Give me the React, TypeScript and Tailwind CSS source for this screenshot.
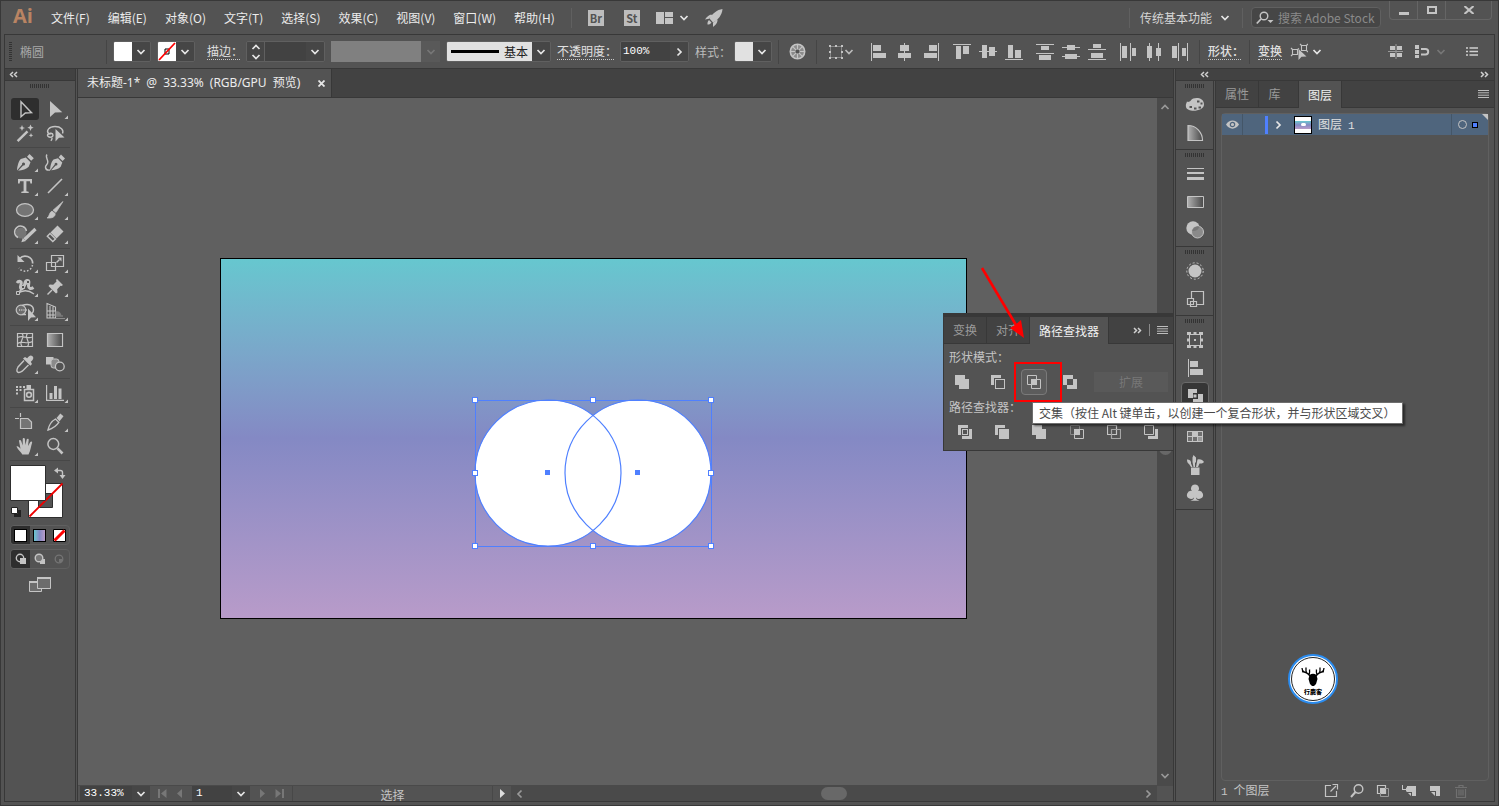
import { useState } from 'react';
import type { ReactNode } from 'react';

type Rect = [x: number, y: number, w: number, h: number];

interface Tool {
  name: string;
  art: ReactNode;
  /** The tool hides a flyout group, marked by a small corner triangle. */
  more?: boolean;
}

const MENUS = ['文件(F)', '编辑(E)', '对象(O)', '文字(T)', '选择(S)', '效果(C)', '视图(V)', '窗口(W)', '帮助(H)'];

const DOC_TITLE = ['未标题-1*', '@', '33.33%', '(RGB/GPU', '预览)'];

/** Align / distribute icons on an 18px grid, three per group. */
const ALIGN_GROUPS: { name: string; rects: Rect[] }[][] = [
  [
    { name: '水平左对齐', rects: [[1, 0, 1, 18], [3, 2, 8, 6], [3, 10, 13, 5]] },
    { name: '水平居中对齐', rects: [[8, 0, 1, 18], [4, 2, 9, 6], [2, 10, 13, 5]] },
    { name: '水平右对齐', rects: [[16, 0, 1, 18], [7, 2, 8, 6], [2, 10, 13, 5]] },
  ],
  [
    { name: '垂直顶对齐', rects: [[0, 1, 18, 1], [3, 3, 5, 13], [10, 3, 6, 8]] },
    { name: '垂直居中对齐', rects: [[0, 8, 18, 1], [3, 2, 5, 13], [10, 4, 6, 9]] },
    { name: '垂直底对齐', rects: [[0, 16, 18, 1], [3, 2, 5, 13], [10, 7, 6, 8]] },
  ],
  [
    { name: '垂直顶分布', rects: [[0, 1, 18, 1], [5, 3, 8, 4], [0, 10, 18, 1], [3, 12, 12, 5]] },
    { name: '垂直居中分布', rects: [[0, 4, 18, 1], [5, 2, 8, 5], [0, 13, 18, 1], [3, 11, 12, 5]] },
    { name: '垂直底分布', rects: [[0, 6, 18, 1], [5, 1, 8, 4], [0, 16, 18, 1], [3, 10, 12, 5]] },
  ],
  [
    { name: '水平左分布', rects: [[1, 0, 1, 18], [3, 3, 5, 12], [11, 0, 1, 18], [13, 5, 4, 8]] },
    { name: '水平居中分布', rects: [[4, 0, 1, 18], [2, 3, 5, 12], [13, 0, 1, 18], [11, 5, 5, 8]] },
    { name: '水平右分布', rects: [[7, 0, 1, 18], [1, 3, 5, 12], [16, 0, 1, 18], [11, 5, 4, 8]] },
  ],
];

const LINE = { fill: 'none', stroke: '#c4c4c4', strokeWidth: 1.4 };

// Tool art is drawn in a 30x24 cell.
const TOOL_GROUPS: Tool[][] = [
  [
    { name: '选择工具', art: <path d="M11 4.8v15l4.3-3.8 6.2-.3z" {...LINE} /> },
    { name: '直接选择工具', art: <path d="M10 4v16l5-4.5 7.3-.3z" />, more: true },
    {
      name: '魔棒工具',
      art: (
        <>
          <path d="M7.6 20.2 17.5 10.3" fill="none" stroke="#c4c4c4" strokeWidth="2.4" />
          <path d="M12 4l.9 2.2 2.1.8-2.1.8L12 10l-.9-2.2L9 7l2.1-.8zM20.500 3.500l1 2.300 2.200.9-2.200.9-1 2.300-1-2.300-2.200-.9 2.200-.9zM21 12l.7 1.700 1.600.6-1.600.6L21 16.500l-.7-1.600-1.600-.6 1.600-.6z" />
        </>
      ),
    },
    {
      name: '套索工具',
      art: (
        <>
          <path d="M8.500 12.500C6 9.500 9 5.500 15 5.500s9 3.500 7.500 7M8 13.500c1.500-2 5-1.500 5 .7s-3.500 2.600-5 1 1-3.200 2.500-1.700M11.500 16.500c1 .6.500 2.200-.7 3.200" {...LINE} />
          <path d="M15.500 8v12.500l3.500-3.700 5.500-.2z" />
        </>
      ),
    },
  ],
  [
    {
      name: '钢笔工具',
      art: (
        <>
          <path d="M7 20.500c.2-4 1.500-9.500 3.800-11.500l5-1.500 4.700 4.700-1.800 4.500c-2 2.300-6.500 3.400-10.600 4l5-5.200a1.500 1.500 0 1 0-1-1zM17 6.700 19.500 4l4.300 4.300-2.600 2.500z" />
        </>
      ),
      more: true,
    },
    {
      name: '曲率工具',
      art: (
        <>
          <path d="M10 20.500c.2-4 1.300-9 3.500-11l4.500-1.300 4.300 4.300-1.600 4.200c-2 2.200-6 3.200-9.600 3.600l4.600-4.800a1.400 1.400 0 1 0-1-1zM18.700 7.200 21 4.500l4 4-2.400 2.400z" />
          <path d="M7 4.500c-2 2 .8 4.500.8 7.500S5 15 5.500 17.500s2 3 4.500 2.500" {...LINE} />
        </>
      ),
    },
    { name: '文字工具', art: <path d="M8 5h14v4.500h-1.600l-.5-2.300h-3.500v10l2.300.5V19h-7.400v-1.300l2.300-.5v-10h-3.500l-.5 2.300H8z" />, more: true },
    { name: '直线段工具', art: <path d="M8 19 22 5" fill="none" stroke="#c4c4c4" strokeWidth="1.600" />, more: true },
    { name: '椭圆工具', art: <ellipse cx="15" cy="12" rx="8.500" ry="6.300" fill="#757575" stroke="#c4c4c4" strokeWidth="1.300" />, more: true },
    {
      name: '画笔工具',
      art: <path d="M23 3.500 16 14.500l-3-2.300zM12 13l3.200 2.500c.2 3.200-2.800 5-8.200 4.500 2.500-1.200 2-5.500 5-7z" stroke="#c4c4c4" strokeWidth=".7" />,
      more: true,
    },
    {
      name: 'Shaper 工具',
      art: (
        <>
          <circle cx="11" cy="11" r="5.500" fill="#757575" />
          <path d="M16.500 9A6 6 0 1 0 8 15.500" {...LINE} />
          <path d="M25.500 7 14.500 17.500" fill="none" stroke="#c4c4c4" strokeWidth="3.200" />
          <path d="M16 19l-4.700 1.200L12.800 16z" />
        </>
      ),
      more: true,
    },
    {
      name: '橡皮擦工具',
      art: (
        <>
          <path d="M17.500 3.500 23.500 9.500 16.500 16.500 10.500 10.500z" />
          <path d="M10 11.500 7.300 14.200 12.800 19.500 15.500 17z" {...LINE} />
        </>
      ),
      more: true,
    },
  ],
  [
    {
      name: '旋转工具',
      art: (
        <>
          <path d="M9.500 7.800C14 2.500 22.500 5.500 22.700 12.500" fill="none" stroke="#c4c4c4" strokeWidth="1.700" />
          <path d="M7.500 4v7h7z" />
          <path d="M22.500 14A7.500 7.500 0 0 1 9 17" fill="none" stroke="#c4c4c4" strokeWidth="1.500" strokeDasharray="1.600 1.800" />
        </>
      ),
      more: true,
    },
    {
      name: '比例缩放工具',
      art: (
        <>
          <path d="M11.500 4.500h12v11h-12zM6.500 11.500h9v8h-9z" {...LINE} strokeWidth="1.200" />
          <path d="M16.500 11.500 19.500 8.500" {...LINE} />
          <path d="M17.500 6.500h4v4z" />
        </>
      ),
      more: true,
    },
    {
      name: '宽度工具',
      art: (
        <>
          <path d="M7 8c2-3 5-1.500 4 1.500s-.5 6 2 3.500 1-7 4-7.500 1.500 3 1.500 5.500 2 3.500 5 1.500" fill="none" stroke="#c4c4c4" strokeWidth="3" />
          <path d="M7.500 18.500c5-3.500 11-3.500 16.500.5M8 18 18 7" {...LINE} />
          <path d="M6.500 16.500h3v3h-3zM16.500 5.500h3v3h-3zM11.500 10.500h3v3h-3z" fill="#535353" stroke="#c4c4c4" />
        </>
      ),
      more: true,
    },
    {
      name: '操控变形工具',
      art: (
        <>
          <path d="M17 4l6 6-1.500 1-1-.3-3.300 3.500.3 3.200L16 18.500 8.500 11l1.200-1.500 3.500.2 3.300-3.300L16 5z" />
          <path d="M12 15 7.500 19.500" {...LINE} />
        </>
      ),
      more: true,
    },
    {
      name: '形状生成器工具',
      art: (
        <>
          <circle cx="11" cy="11" r="4.800" fill="#6c6c6c" stroke="#c4c4c4" strokeWidth="1.200" />
          <path d="M12 6.500c7-2.500 11.500 0 11.500 4.500 0 1.500-.5 2.500-1.500 3.500M12 15.500h4" {...LINE} />
          <path d="M9 11h8" fill="none" stroke="#c4c4c4" strokeWidth="1.300" strokeDasharray="1.200 1" />
          <path d="M18 9.500V22l3-3.600 5-.2z" />
        </>
      ),
      more: true,
    },
    {
      name: '透视网格工具',
      art: (
        <>
          <path d="M7 4.500 15.500 8v11H7zM7 12h8.500M10 5.500v13.500M13 7v12M7 16h8" {...LINE} strokeWidth="1.100" />
          <path d="M15.500 12.500c3-1 5.500 1 6 4h-6z" fill="#7d7d7d" />
          <path d="M15 17h8M15 19.500h10" stroke="#8d8d8d" />
        </>
      ),
      more: true,
    },
  ],
  [
    {
      name: '网格工具',
      art: <path d="M7.500 5.500h15v13h-15zM7.500 9.500c6-3 9 2 15-.5M7.500 15.500c5-3.500 9 1.500 15-2M12 5.500c4 4-4 8 0 13M17.500 5.500c-4 4 4 9 0 13" {...LINE} strokeWidth="1.200" />,
    },
    { name: '渐变工具', art: <path d="M7.500 5.500h15v13h-15z" fill="url(#grey-ramp)" stroke="#c4c4c4" strokeWidth="1.200" /> },
    {
      name: '吸管工具',
      art: (
        <>
          <path d="M14 8.500 8 15c-.8 1.500-1.500 4-.5 5s3.500 0 4.700-.8L18.500 13" {...LINE} />
          <path d="M13 6.500l2-1.500 2.200 1.200C19.500 3 21 3 22.500 4.200s1 3.300-1.700 5.500L22 12l-1.600 1.700z" />
        </>
      ),
      more: true,
    },
    {
      name: '混合工具',
      art: (
        <>
          <path d="M6 5h7.500v7.500H6z" />
          <rect x="11" y="7" width="8" height="9" rx="2.500" fill="#8a8a8a" stroke="#c4c4c4" />
          <circle cx="19.800" cy="14.500" r="4.400" fill="#535353" stroke="#c4c4c4" strokeWidth="1.300" />
        </>
      ),
    },
  ],
  [
    {
      name: '符号喷枪工具',
      art: (
        <>
          <path d="M14.500 8.500h9v11h-9z" {...LINE} strokeWidth="1.500" />
          <path d="M16.500 4h4.500v4.500h-4.500zM6 5h2v2H6zM9.500 5h2v2h-2zM13 5h2v2h-2zM6 8h2v2H6zM9.500 8h2v2h-2zM6 11.500h2v2H6z" />
          <circle cx="19" cy="13.800" r="2.400" {...LINE} strokeWidth="1.600" />
        </>
      ),
      more: true,
    },
    { name: '柱形图工具', art: <path d="M6 4h1.200v14.800H24V20H6zM9.500 12h3v6h-3zM14 5h3v13h-3zM18.500 7.500h3V18h-3z" />, more: true },
  ],
  [
    {
      name: '画板工具',
      art: (
        <>
          <path d="M10.500 8.500H18l3.500 3.500v6.500h-11z" fill="#757575" stroke="#c4c4c4" strokeWidth="1.200" />
          <path d="M10.500 3v4M5 8.500h4" {...LINE} strokeWidth="1.200" />
        </>
      ),
    },
    {
      name: '切片工具',
      art: (
        <>
          <path d="M8 20c1-5 3-8.500 7.500-11l3.300 3.300C16 16.500 12.500 18.500 8 20z" {...LINE} />
          <path d="M16.500 8l3.800-4.500 3.200 2.700-4 5z" />
        </>
      ),
      more: true,
    },
    {
      name: '抓手工具',
      art: <path d="M6.500 12.500c1-.8 2.500 0 4 2.300L9 7c0-1.500 1.800-1.500 2.200 0l1.500 4.500V5c0-1.500 2-1.500 2.200 0l.5 6 1.300-5.500c.4-1.400 2.200-1 2 .5L18 12l2.300-4c.8-1.200 2.200-.5 1.800.8-1 3-1.500 8-3.600 11.700h-6.200c-1-2.500-4.300-4.500-5.800-8z" />,
      more: true,
    },
    {
      name: '缩放工具',
      art: (
        <>
          <circle cx="13.300" cy="10" r="5.400" {...LINE} strokeWidth="1.500" />
          <path d="M17.500 14.300 22.500 19.500" fill="none" stroke="#c4c4c4" strokeWidth="2.600" />
        </>
      ),
    },
  ],
];

// Dock art is drawn in a 20x20 cell.
const DOCK_GROUPS: { name: string; art: ReactNode }[][] = [
  [
    {
      name: '颜色',
      art: (
        <>
          <path d="M2 6c0 1.700 3 .7 4-.8C8 2 19 1.500 19 9.500c0 7-16.500 8.500-18 2.500C.500 8.500 2 8 2 6z" />
          <path d="M4.500 11h2.500v2H4.500zM9 12.500h2.500v2H9zM13.500 11.500H16v2h-2.500zM15.500 7.500h2v2h-2zM12 5.500h2.500v2H12z" fill="#535353" />
        </>
      ),
    },
    { name: '颜色参考', art: <path d="M3 2.500c8 0 14.500 6.500 14.500 15H3z" fill="url(#grey-ramp)" stroke="#c4c4c4" strokeWidth="1.200" /> },
  ],
  [
    { name: '描边', art: <path d="M2 4h17v1H2zM2 8h17v2H2zM2 13h17v3H2z" /> },
    { name: '渐变', art: <path d="M2.500 4.500h16v11h-16z" fill="url(#grey-ramp)" stroke="#c4c4c4" /> },
    {
      name: '透明度',
      art: (
        <>
          <circle cx="8" cy="8" r="6.700" />
          <circle cx="12.500" cy="12" r="6" fill="#8a8a8a" stroke="#c4c4c4" />
          <path d="M7 11a6 6 0 0 1 7.500-4.500A7 7 0 0 1 7 11z" fill="#777" />
        </>
      ),
    },
  ],
  [
    {
      name: '外观',
      art: (
        <>
          <circle cx="10" cy="10" r="6.500" />
          <circle cx="10" cy="10" r="8.200" fill="none" stroke="#c4c4c4" strokeDasharray="2 2" />
        </>
      ),
    },
    { name: '图形样式', art: <path d="M6.500 9V2.500h12v13H11M2.500 9.500h6v6h-6zM5.500 12.500h6v5h-6z" {...LINE} strokeWidth="1.200" /> },
  ],
  [
    {
      name: '变换',
      art: (
        <>
          <path d="M4.500 4.500h11v11h-11z" {...LINE} strokeWidth="1" />
          <path d="M2 2h4v3H2zM8.500 2h3v3h-3zM14 2h4v3h-4zM2 8.500h3v3H2zM15 8.500h3v3h-3zM2 15h4v3H2zM8.500 15h3v3h-3zM14 15h4v3h-4zM9 9h2v2H9z" />
        </>
      ),
    },
    { name: '对齐', art: <path d="M3 1h1v18H3zM5 3h8v6H5zM5 11h13v6H5z" /> },
    { name: '路径查找器', art: <path d="M3 3h9v4H8v5H3zM13 8h5v10H8v-5h5zM8.500 8.500h3v3h-3z" /> },
  ],
  [
    { name: '色板', art: <><path d="M2 4h16v11H2z" /><path d="M3 5h4v4H3zM13 5h4v4h-4zM3 10h4v4H3zM8 10h4v4H8z" fill="#6f6f6f" /><path d="M13 10h4v4h-4z" fill="#999" /></> },
    { name: '画笔', art: <path d="M6 12.500h8.500V20H6zM8.500 0l2.500 2.500V7l-1 1v4H8.500L7.500 7V2.500zM2 4.500c3-.5 4.500 2 4 4l1.500 3.500H6L4 9C2.500 8 2 6.500 2 4.500zM12.500 4.500C15 3.500 18 5 19 7c-1.500 2-3.500 1.500-4.500 1.500L13 12h-2z" /> },
    { name: '符号', art: <path d="M10 1.500a4 4 0 0 1 3.200 6.500 4 4 0 1 1-2.200 6.500c0 1.500 1 2.500 3.500 3.200H5.500C8 17 9 16 9 14.500A4 4 0 1 1 6.800 8 4 4 0 0 1 10 1.500z" /> },
  ],
];

// Pathfinder art is drawn in a 14x14 box.
const SHAPE_MODES = [
  { name: '联集', art: <path d="M0 0h10v4h4v10H4v-4H0z" /> },
  { name: '减去顶层', art: <path d="M0 0h10v3H3v7H0zM4 4h10v10H4zM5 5v8h8V5z" fillRule="evenodd" /> },
  { name: '交集', art: <><path d="M.500.500h9v9h-9zM4.500 4.500h9v9h-9z" {...LINE} strokeWidth="1" /><path d="M4 4h6v6H4z" /></> },
  { name: '差集', art: <path d="M0 0h10v4H4v6H0zM10 4h4v10H4v-4h6z" /> },
];

const PATHFINDERS = [
  { name: '分割', art: <path d="M0 0h10v3H3v7H0zM11 4h3v10H4v-3h7zM4 4h6v6H4zM5 5v4h4V5z" fillRule="evenodd" /> },
  { name: '修边', art: <path d="M0 0h10v3H3v7H0zM4 4h10v10H4z" /> },
  { name: '合并', art: <path d="M0 0h10v4h4v10H4v-4H0z" /> },
  { name: '裁剪', art: <><path d="M.500.500h9v9h-9z" {...LINE} stroke="#888" strokeWidth="1" /><path d="M4.500 10v3.500h9v-9H10" {...LINE} strokeWidth="1" /><path d="M4 4h6v6H4z" /></> },
  { name: '轮廓', art: <><path d="M.500.500h9v9h-9z" {...LINE} strokeWidth="1.200" /><path d="M4.500 4.500h9v9h-9z" {...LINE} stroke="#a5a5a5" strokeWidth="1.200" /></> },
  { name: '减去后方对象', art: <><path d="M.500.500h9v9h-9z" {...LINE} strokeWidth="1" /><path d="M11 4h3v10H4v-3h7z" /></> },
];

const LAYER_ACTIONS = [
  { name: '收集以导出', art: <path d="M8 2.500H2.500v11h11V8M7.500 8.500 13 3M9.500 1.500h5v5" {...LINE} strokeWidth="1.200" /> },
  { name: '定位对象', art: <><circle cx="9.500" cy="6" r="4.300" {...LINE} /><path d="M6.500 9 2 14" {...LINE} strokeWidth="2" /></> },
  { name: '建立剪切蒙版', art: <><path d="M2.500 2.500h8v8h-8z" {...LINE} strokeWidth="1.200" /><path d="M5.500 5.500h8v8h-8z" {...LINE} stroke="#999" strokeWidth="1" /><path d="M5 5h5v5H5z" /></> },
  { name: '创建新子图层', art: <path d="M6 3h9v10h-4V9H6zM7 10h3v3zM1 2h1v4h3V4l2.500 2.500L5 9V7H1z" /> },
  { name: '创建新图层', art: <path d="M3 3h10v10H9V8H3zM4 9h4v4z" /> },
  { name: '删除所选图层', art: <path d="M2 4.500h12M6 4V2.500h4V4M3.500 6v8.500h9V6M6 6.500v6M8 6.500v6M10 6.500v6" fill="none" stroke="#707070" strokeWidth="1.200" /> },
];

const HANDLES = [[0, 0], [118, 0], [236, 0], [0, 73], [236, 73], [0, 146], [118, 146], [236, 146]];

function Icon({ w, h = w, children }: { w: number; h?: number; children: ReactNode }) {
  return (
    <svg width={w} height={h} viewBox={`0 0 ${w} ${h}`} fill="#c4c4c4" className="block shrink-0" aria-hidden="true">
      {children}
    </svg>
  );
}

function Chevron({ dir = 'down', color = '#e6e6e6' }: { dir?: 'down' | 'up' | 'left' | 'right'; color?: string }) {
  const d = {
    down: 'M1.500 3 5 6.500 8.500 3',
    up: 'M1.500 7 5 3.500 8.500 7',
    left: 'M6.500 1.500 3 5l3.500 3.500',
    right: 'M3.500 1.500 7 5 3.500 8.500',
  }[dir];
  return (
    <Icon w={10}>
      <path d={d} fill="none" stroke={color} strokeWidth="1.700" />
    </Icon>
  );
}

function DoubleChevron({ dir }: { dir: 'left' | 'right' }) {
  return (
    <Icon w={9} h={7}>
      <path
        d={dir === 'left' ? 'M4 1 1.500 3.500 4 6M8 1 5.500 3.500 8 6' : 'M1 1l2.500 2.500L1 6M5 1l2.500 2.500L5 6'}
        fill="none"
        stroke="#d0d0d0"
        strokeWidth="1.500"
      />
    </Icon>
  );
}

function Grip() {
  return (
    <Icon w={20} h={4}>
      <path d="M0 2h20" stroke="#333" strokeWidth="4" strokeDasharray="1 1" />
    </Icon>
  );
}

function MenuLines() {
  return (
    <Icon w={11} h={8}>
      <path d="M0 .5h11M0 2.800h11M0 5.200h11M0 7.500h11" stroke="#bdbdbd" strokeWidth="1" />
    </Icon>
  );
}

/** Square chevron button closing a combo box. */
function DropButton({ label, dir = 'down' }: { label: string; dir?: 'down' | 'right' }) {
  return (
    <button type="button" aria-label={label} className="flex w-[18px] shrink-0 items-center justify-center bg-[#464646]">
      <Chevron dir={dir} />
    </button>
  );
}

function Combo({ children }: { children: ReactNode }) {
  return <div className="flex h-[21px] shrink-0 overflow-hidden rounded-xs border border-[#606060]">{children}</div>;
}

function Divider() {
  return <span className="h-6 w-px shrink-0 bg-[#454545]" />;
}

function MenuBar() {
  return (
    <header className="flex h-[33px] items-center pr-[6px] pl-3">
      <span className="w-[38px] self-start font-['Open_Sans'] text-[20px] leading-[30px] font-bold text-[#b98463]">Ai</span>
      <nav className="flex gap-[18px]">
        {MENUS.map((m) => (
          <button key={m} type="button" className="text-xs whitespace-nowrap text-[#ececec]">
            {m}
          </button>
        ))}
      </nav>
      <span className="mx-4 h-5 w-px bg-[#606060]" />
      <div className="flex items-center gap-5">
        {['Br', 'St'].map((app) => (
          <button key={app} type="button" className="size-4 bg-[#bdbdbd] text-center text-[11px] leading-4 font-bold text-[#535353]">
            {app}
          </button>
        ))}
      </div>
      <button type="button" aria-label="排列文档" className="ml-4 flex items-center gap-1.5">
        <Icon w={17} h={12}>
          <path d="M0 0h8v12H0zM9 0h8v5H9zM9 6h8v6H9z" />
        </Icon>
        <Chevron />
      </button>
      <button type="button" aria-label="GPU 性能" className="ml-4">
        <Icon w={18}>
          <path d="M17.500 0C12 .8 7.500 4.500 4.500 9.500l3.500 4C13.500 10.500 17 6 17.500 0zM7.500 5.500C4 5.500 2 7.500 0 10.500l4-.8zM12.500 10.500c.3 3.500-2 5.500-4.500 7.500v-4.200zM4 11c-1.800 1.500-1.500 3.500-1.500 4.500 1.500 0 3-.3 4-2z" />
        </Icon>
      </button>

      <div className="ml-auto flex items-center">
        <span className="h-5 w-px bg-[#606060]" />
        <button type="button" className="ml-[10px] flex items-center gap-2 text-xs whitespace-nowrap text-[#d6d6d6]">
          传统基本功能
          <Chevron />
        </button>
        <span className="mx-2 ml-3 h-5 w-px bg-[#606060]" />
        <label className="flex h-[21px] w-[130px] items-center gap-1 rounded-sm border border-[#606060] bg-[#464646] pl-1">
          <Icon w={18} h={14}>
            <circle cx="8" cy="5" r="3.800" {...LINE} />
            <path d="M5 8 .8 12.500" {...LINE} strokeWidth="1.800" />
            <path d="M11.500 9h6L14.500 12z" />
          </Icon>
          <input
            type="text"
            aria-label="搜索"
            placeholder="搜索 Adobe Stock"
            className="w-full min-w-0 bg-transparent text-xs text-[#ddd] outline-none placeholder:text-[#8a8a8a]"
          />
        </label>
      </div>
      <div className="ml-2 flex h-[19px] self-start rounded-b-sm border border-t-0 border-[#656565]">
        <button type="button" aria-label="最小化" className="flex w-7 items-center justify-center border-r border-[#656565]">
          <Icon w={10} h={12}>
            <path d="M0 8h10v3H0z" />
          </Icon>
        </button>
        <button type="button" aria-label="最大化" className="flex w-7 items-center justify-center border-r border-[#656565]">
          <Icon w={10} h={8}>
            <path d="M1 1h8v6H1z" fill="none" stroke="#c4c4c4" strokeWidth="2" />
          </Icon>
        </button>
        <button type="button" aria-label="关闭" className="flex w-[45px] items-center justify-center">
          <Icon w={10} h={8}>
            <path d="M.5 0 9.500 8M9.500 0 .5 8" stroke="#c4c4c4" strokeWidth="2" />
          </Icon>
        </button>
      </div>
    </header>
  );
}

function OptionsBar() {
  const label = 'block border-b border-dotted border-[#c8c8c8] text-xs leading-4 whitespace-nowrap text-[#e0e0e0]';
  return (
    <div className="flex h-[34px] items-center border-b border-[#383838]">
      <div className="flex w-[101px] shrink-0 items-center gap-2 pl-1">
        <Icon w={3} h={20}>
          <path d="M1.500 0v20" stroke="#333" strokeWidth="3" strokeDasharray="1 1" />
        </Icon>
        <span className="text-xs text-[#a8a8a8]">椭圆</span>
      </div>
      <Divider />
      <div className="flex items-center gap-1.5 px-1.5">
        <Combo>
          <span className="w-[18px] bg-white" />
          <DropButton label="填色" />
        </Combo>
        <Combo>
          <span className="bg-white">
            <Icon w={18} h={19}>
              <path d="M7 7h4v5H7z" fill="none" stroke="#000" />
              <path d="M1 18 17 1" stroke="#f00" strokeWidth="1.800" />
            </Icon>
          </span>
          <DropButton label="描边颜色" />
        </Combo>
        <label htmlFor="stroke-weight" className={`${label} ml-1.5 w-[33px]`}>
          描边：
        </label>
        <Combo>
          <button type="button" aria-label="调整描边粗细" className="flex w-[17px] flex-col items-center justify-center bg-[#464646]">
            <Chevron dir="up" />
            <Chevron />
          </button>
          <input id="stroke-weight" className="w-[42px] border-l border-[#606060] bg-[#424242] text-xs text-white outline-none" />
          <DropButton label="描边粗细预设" />
        </Combo>
        <div className="flex h-[21px] shrink-0">
          <span className="w-[90px] bg-[#808080]" />
          <button type="button" aria-label="变量宽度配置文件" disabled className="flex w-[19px] items-center justify-center bg-[#595959]">
            <Chevron color="#777" />
          </button>
        </div>
        <Combo>
          <span className="flex w-[85px] items-center justify-between bg-[#e1e1e1] px-1 text-xs whitespace-nowrap text-[#222]">
            <span className="h-[3px] w-12 bg-black" />
            基本
          </span>
          <DropButton label="画笔定义" />
        </Combo>
        <label htmlFor="opacity" className={`${label} w-[57px]`}>
          不透明度：
        </label>
        <Combo>
          <input id="opacity" defaultValue="100%" className="w-[49px] bg-[#424242] pl-0.5 font-['Liberation_Mono'] text-[11px] text-white outline-none" />
          <DropButton label="不透明度选项" dir="right" />
        </Combo>
        <span className="w-[33px] text-xs whitespace-nowrap text-[#bcbcbc]">样式：</span>
        <Combo>
          <span className="w-[18px] bg-[#e1e1e1]" />
          <DropButton label="图形样式" />
        </Combo>
      </div>
      <Divider />
      <button type="button" aria-label="重新着色图稿" className="flex w-[37px] shrink-0 justify-center">
        <Icon w={17}>
          <circle cx="8.500" cy="8.500" r="7.200" fill="#8b8b8b" stroke="#c4c4c4" strokeWidth="1.600" />
          <path d="M8.500 1v15M1 8.500h15M3.200 3.200l10.600 10.600M13.800 3.200 3.200 13.800" stroke="#c4c4c4" strokeWidth="1.200" />
          <circle cx="8.500" cy="8.500" r="2" fill="#535353" />
        </Icon>
      </button>
      <Divider />
      <button type="button" aria-label="对齐方式" className="mr-4 ml-[11px] flex shrink-0 items-center">
        <Icon w={16}>
          <path d="M2.500 2.500h11v11h-11z" fill="none" stroke="#888" />
          <path d="M1 1h2v2H1zM7 1h2v2H7zM13 1h2v2h-2zM1 7h2v2H1zM13 7h2v2h-2zM1 13h2v2H1zM7 13h2v2H7zM13 13h2v2h-2z" />
        </Icon>
        <Chevron color="#bbb" />
      </button>
      <div className="flex shrink-0 gap-[13px]">
        {ALIGN_GROUPS.map((group, g) => (
          <div key={g} className="flex gap-2">
            {group.map((a) => (
              <button key={a.name} type="button" aria-label={a.name}>
                <Icon w={18}>
                  {a.rects.map(([x, y, w, h], i) => (
                    <rect key={i} x={x} y={y} width={w} height={h} />
                  ))}
                </Icon>
              </button>
            ))}
          </div>
        ))}
      </div>
      <div className="flex items-center gap-2 pl-2.5">
        <Divider />
        <button type="button" className={`${label} w-[33px] text-left font-medium`}>
          形状：
        </button>
        <Divider />
        <button type="button" className={`${label} font-medium`}>
          变换
        </button>
        <button type="button" aria-label="隔离选中的对象" className="flex items-center gap-1">
          <Icon w={18}>
            <path d="M2.500 6.500h5v5h-5zM11.500 2.500h5v5h-5zM1 5l1.500 1.500M1 13l1.500-1.500M10 1l1.500 1.500M18 1l-1.500 1.500M9 5.500 7.500 6.500M18 9l-1.500-1.500" {...LINE} strokeWidth="1.100" />
            <path d="M8.500 6v11l3-3.200 5-.2z" />
          </Icon>
          <Chevron />
        </button>
      </div>
      <div className="ml-auto flex items-center gap-5 pr-4">
        <div className="flex items-center gap-3">
          <button type="button" aria-label="网格">
            <Icon w={15}>
              <path d="M2 2h5v4H2zM9 2h5v4H9zM2 9h5v4H2zM9 9h5v4H9z" />
              <path d="M8 0v15M0 7.500h15" stroke="#999" />
            </Icon>
          </button>
          <button type="button" aria-label="对齐像素" className="flex items-center gap-1.5">
            <Icon w={15}>
              <path d="M0 1h4v4H0zM0 6h4v4H0zM0 11h4v3H0z" />
              <path d="M6 5h4.500a2.700 2.700 0 0 1 0 5.400H6" fill="none" stroke="#c4c4c4" strokeWidth="2" />
            </Icon>
            <Chevron color="#777" />
          </button>
        </div>
        <button type="button" aria-label="控制面板菜单">
          <Icon w={12} h={9}>
            <path d="M0 1h2M3.500 1H12M0 4.500h2M3.500 4.500H12M0 8h2M3.500 8H12" stroke="#d0d0d0" strokeWidth="1.300" />
          </Icon>
        </button>
      </div>
    </div>
  );
}

function ToolPanel() {
  const [active, setActive] = useState('选择工具');
  return (
    <aside className="flex w-[71px] shrink-0 flex-col border-r border-[#383838]">
      <button type="button" aria-label="折叠工具栏" className="flex h-3 items-center border-b border-[#383838] bg-[#424242] pl-1">
        <DoubleChevron dir="left" />
      </button>
      <div className="flex h-4 justify-center pt-[3px]">
        <Grip />
      </div>
      <div className="mx-[5px]">
        {TOOL_GROUPS.map((group, g) => (
          <div key={g} className="grid grid-cols-2 border-b border-[#474747] py-0.5 first:pt-0">
            {group.map((t) => (
              <button
                key={t.name}
                type="button"
                aria-label={t.name}
                aria-pressed={t.name === active}
                onClick={() => setActive(t.name)}
              >
                <Icon w={30} h={24}>
                  {t.name === active && <rect x="1" y="1" width="28" height="22" rx="3" fill="#2e2e2e" />}
                  {t.art}
                  {t.more && <path d="M28 18.500V22h-3.500z" />}
                </Icon>
              </button>
            ))}
          </div>
        ))}
        <button type="button" aria-label="填色和描边" className="mt-1 block">
          <Icon w={60} h={56}>
            <path d="M18.500 18.500h34v34h-34z" fill="#fff" stroke="#2e2e2e" />
            <path d="M28.500 28.500h14v14h-14z" fill="#535353" stroke="#2e2e2e" />
            <path d="M19.500 51.500 52.500 18.500" stroke="#e00" strokeWidth="1.800" />
            <path d="M.5 .5h35v35H.5z" fill="#fff" stroke="#2e2e2e" />
            <path d="M46 5.500h4.500q2 0 2 2V12" {...LINE} />
            <path d="M44 5.500l4-3v6zM49.500 10h6l-3 4z" />
            <path d="M5.500 46.500h4v4h-4z" fill="none" stroke="#222" strokeWidth="3" />
            <path d="M1.500 42.500h6v6h-6z" fill="#fff" stroke="#222" />
          </Icon>
        </button>
        <div className="mt-1 flex overflow-hidden rounded-sm border border-[#606060]">
          <button type="button" aria-label="颜色" className="flex h-[18px] flex-1 items-center justify-center bg-[#2e2e2e]">
            <span className="size-[13px] border border-black bg-white" />
          </button>
          <button type="button" aria-label="渐变" className="flex h-[18px] flex-1 items-center justify-center">
            <span className="size-[13px] border border-black bg-linear-to-r from-[#66c7cf] via-[#8489c4] to-[#b89bc9]" />
          </button>
          <button type="button" aria-label="无" className="flex h-[18px] flex-1 items-center justify-center">
            <Icon w={13}>
              <path d="M.5.5h12v12H.5z" fill="#fff" stroke="#000" />
              <path d="M1.500 11.500l10-10" stroke="#f00" strokeWidth="3" />
            </Icon>
          </button>
        </div>
        <div className="mt-1 flex overflow-hidden rounded-sm border border-[#606060]">
          {['正常绘图', '背面绘图', '内部绘图'].map((mode, i) => (
            <button
              key={mode}
              type="button"
              aria-label={mode}
              className={i === 0 ? 'flex h-[18px] flex-1 items-center justify-center bg-[#2e2e2e]' : 'flex h-[18px] flex-1 items-center justify-center'}
            >
              <Icon w={12}>
                {i === 0 && (
                  <>
                    <circle cx="5" cy="5" r="3.700" {...LINE} />
                    <path d="M5 5h6v6H5z" />
                  </>
                )}
                {i === 1 && (
                  <>
                    <path d="M6 6h5v5H6z" />
                    <circle cx="5" cy="5" r="3.800" fill="#777" stroke="#c4c4c4" strokeWidth="1.400" />
                  </>
                )}
                {i === 2 && (
                  <>
                    <circle cx="6" cy="6" r="3.800" fill="none" stroke="#747474" strokeWidth="1.300" />
                    <path d="M6 6h3v3H6z" fill="#747474" />
                  </>
                )}
              </Icon>
            </button>
          ))}
        </div>
        <button type="button" aria-label="更改屏幕模式" className="mx-auto mt-2 block">
          <Icon w={22} h={16}>
            <path d="M.5 4.500h12v10H.5z" fill="#6c6c6c" stroke="#c4c4c4" />
            <path d="M8.500.5h13v11h-13z" fill="#6c6c6c" stroke="#c4c4c4" />
            <path d="M0 4h8v2H0zM8 0h14v2H8z" />
          </Icon>
        </button>
      </div>
    </aside>
  );
}

function Artboard() {
  return (
    <div className="absolute top-40 left-[142px] h-[361px] w-[747px] border border-black bg-linear-to-b from-[#66c7cf] via-[#8489c4] to-[#b89bc9]">
      <svg width="242" height="152" viewBox="-3 -3 242 152" className="absolute top-[138px] left-[251px]" role="img" aria-label="两个重叠的圆">
        <circle cx="73" cy="73" r="73" fill="#fff" />
        <circle cx="163" cy="73" r="73" fill="#fff" />
        <g fill="none" stroke="#4f80ff" strokeWidth="1.200">
          <circle cx="73" cy="73" r="73" />
          <circle cx="163" cy="73" r="73" />
          <rect x=".5" y=".5" width="236" height="146" strokeWidth="1" />
        </g>
        <path d="M70 70h5v5h-5zM160 70h5v5h-5z" fill="#4f80ff" />
        {HANDLES.map(([x, y]) => (
          <rect key={`${x}-${y}`} x={x - 2.5} y={y - 2.5} width="5" height="5" fill="#fff" stroke="#4f80ff" />
        ))}
      </svg>
    </div>
  );
}

function PathfinderPanel() {
  return (
    <section className="absolute top-[244px] right-[-1px] z-10 w-[231px] border border-t-4 border-[#383838] bg-[#535353]">
      <div className="flex h-[27px] items-stretch border-b border-[#383838] bg-[#424242] text-xs whitespace-nowrap text-[#9a9a9a]">
        <button type="button" className="w-[43px] border-r border-[#383838]">
          变换
        </button>
        <button type="button" className="w-[43px] border-r border-[#383838]">
          对齐
        </button>
        <button type="button" className="-mb-px w-[79px] border-r border-[#383838] bg-[#535353] text-[#f0f0f0]">
          路径查找器
        </button>
        <div className="ml-auto flex items-center gap-[7px] pr-[5px]">
          <DoubleChevron dir="right" />
          <span className="h-3 w-px bg-[#8a8a8a]" />
          <MenuLines />
        </div>
      </div>
      <div className="p-[5px] text-xs text-[#c4c4c4]">
        <p className="leading-4">形状模式：</p>
        <div className="mt-1 flex items-center gap-2.5">
          {SHAPE_MODES.map((m) => (
            <button
              key={m.name}
              type="button"
              aria-label={m.name}
              className={
                m.name === '交集'
                  ? 'flex size-[26px] items-center justify-center rounded-sm border border-[#7a7a7a] bg-[#5c5c5c]'
                  : 'flex size-[26px] items-center justify-center'
              }
            >
              <Icon w={14}>{m.art}</Icon>
            </button>
          ))}
          <button type="button" disabled className="ml-auto h-5 w-[74px] bg-[#595959] text-[#777]">
            扩展
          </button>
        </div>
        <p className="mt-1 leading-4">路径查找器：</p>
        <div className="mt-1 flex justify-between pr-1 pl-[3px]">
          {PATHFINDERS.map((p) => (
            <button key={p.name} type="button" aria-label={p.name} className="flex size-[26px] items-center justify-center">
              <Icon w={14}>{p.art}</Icon>
            </button>
          ))}
        </div>
      </div>

      {/* Callout pointing at the intersect mode */}
      <svg width="90" height="140" viewBox="0 0 90 140" className="pointer-events-none absolute -top-[50px] left-[34px]" aria-hidden="true">
        <path d="M4 1 38 58" stroke="#f00" strokeWidth="2.600" />
        <path d="M46 71 32 61l5-3 6-5z" fill="#f00" />
        <path d="M37 96h46v38H37z" fill="none" stroke="#f00" strokeWidth="2" />
      </svg>
      <p
        role="tooltip"
        className="absolute top-[85px] left-[88px] border border-[#6e6e6e] bg-white px-1.5 text-xs leading-5 whitespace-nowrap text-[#4a4a4a] shadow-[2px_2px_2px_rgba(0,0,0,0.5)]"
      >
        交集（按住 Alt 键单击，以创建一个复合形状，并与形状区域交叉）
      </p>
    </section>
  );
}

function StatusBar() {
  const nav = 'flex w-[17px] items-center justify-center';
  const field = "bg-[#424242] pl-1 font-['Liberation_Mono'] text-[11px] text-white outline-none";
  return (
    <footer className="flex h-4 border-t border-[#4a4a4a]">
      <input aria-label="缩放" defaultValue="33.33%" className={`${field} ml-0.5 w-[52px]`} />
      <DropButton label="缩放级别" />
      <div className="flex px-1">
        <button type="button" aria-label="首个画板" disabled className={nav}>
          <Icon w={9}>
            <path d="M0 0h2v9H0zM8.500 0v9L3 4.500z" fill="#777" />
          </Icon>
        </button>
        <button type="button" aria-label="上一个画板" disabled className={nav}>
          <Icon w={9}>
            <path d="M7 0v9L2 4.500z" fill="#777" />
          </Icon>
        </button>
      </div>
      <input aria-label="画板" defaultValue="1" className={`${field} w-[40px]`} />
      <DropButton label="画板列表" />
      <div className="flex px-1">
        <button type="button" aria-label="下一个画板" disabled className={nav}>
          <Icon w={9}>
            <path d="M2 0v9l5-4.500z" fill="#777" />
          </Icon>
        </button>
        <button type="button" aria-label="末个画板" disabled className={nav}>
          <Icon w={9}>
            <path d="M.5 0v9L6 4.500zM7 0h2v9H7z" fill="#777" />
          </Icon>
        </button>
      </div>
      <span className="w-[201px] border-x border-[#484848] text-center text-xs leading-[18px] text-[#c4c4c4]">选择</span>
      <button type="button" aria-label="状态栏选项" className="flex w-[18px] items-center justify-center">
        <Icon w={9}>
          <path d="M2 0v9l5-4.500z" fill="#ddd" />
        </Icon>
      </button>
      <div className="flex flex-1 items-center justify-between bg-[#4a4a4a] px-1">
        <Chevron dir="left" color="#999" />
        <span className="h-[13px] w-[26px] rounded-full bg-[#686868]" />
        <Chevron dir="right" color="#999" />
      </div>
      <span className="w-4" />
    </footer>
  );
}

function DocumentArea() {
  return (
    <main className="relative ml-px flex min-w-0 flex-1 flex-col border-x border-[#383838]">
      <div className="flex h-[29px] border-b border-[#383838] bg-[#424242]">
        <div className="flex w-[254px] items-center justify-between border-r border-[#383838] bg-[#535353] pr-1.5 pl-[9px] text-[#ececec]">
          <span className="flex gap-1.5 font-['Noto_Sans','Noto_Sans_CJK_SC',sans-serif] text-xs whitespace-nowrap">
            {DOC_TITLE.map((word) => (
              <span key={word}>{word}</span>
            ))}
          </span>
          <button type="button" aria-label="关闭文档">
            <Icon w={7}>
              <path d="M.5.5l6 6M6.500.5l-6 6" stroke="#e6e6e6" strokeWidth="1.800" />
            </Icon>
          </button>
        </div>
      </div>
      <div className="flex flex-1">
        <div className="relative flex-1 overflow-hidden bg-[#606060]">
          <Artboard />
        </div>
        <div className="flex w-4 flex-col items-center justify-between bg-[#4a4a4a] py-1">
          <Chevron dir="up" color="#999" />
          <span className="h-[26px] w-[13px] rounded-full bg-[#686868]" />
          <Chevron color="#999" />
        </div>
      </div>
      <StatusBar />
      <PathfinderPanel />
    </main>
  );
}

function LayersPanel() {
  return (
    <section className="ml-px flex min-w-0 flex-1 flex-col border-l border-[#383838]">
      <div className="flex h-[27px] border-b border-[#383838] bg-[#424242] text-xs whitespace-nowrap text-[#9a9a9a]">
        <button type="button" className="w-[43px] border-r border-[#383838]">
          属性
        </button>
        <button type="button" className="w-10 border-r border-[#383838] pr-2">
          库
        </button>
        <button type="button" className="-mb-px w-[43px] border-r border-[#383838] bg-[#535353] text-[#f0f0f0]">
          图层
        </button>
        <button type="button" aria-label="面板菜单" className="ml-auto pr-[5px]">
          <MenuLines />
        </button>
      </div>
      <div className="relative mx-[5px] mt-[5px] flex-1 rounded-sm border border-[#606060]">
        <div className="relative flex h-[21px] items-center bg-[#4f657d]">
          <button type="button" aria-label="切换可视性" className="flex h-full w-[21px] items-center justify-center border-r border-[#445668]">
            <Icon w={13} h={9}>
              <path d="M0 4.500C3-1 10-1 13 4.500 10 10 3 10 0 4.500z" />
              <circle cx="6.500" cy="4.500" r="2.200" fill="none" stroke="#4f657d" strokeWidth="1.200" />
            </Icon>
          </button>
          <span className="ml-[22px] h-[18px] w-[3px] bg-[#4f80ff]" />
          <button type="button" aria-label="展开图层" className="mx-[5px]">
            <Chevron dir="right" />
          </button>
          <span className="ml-1.5 flex size-[18px] items-center border border-black bg-white">
            <span className="flex h-2 w-full items-center justify-center bg-linear-to-b from-[#66c7cf] via-[#8489c4] to-[#b89bc9]">
              <span className="h-[3px] w-[5px] rounded-full bg-white" />
            </span>
          </span>
          <span className="ml-1.5 flex items-baseline gap-1.5 text-xs text-[#e0e0e0]">
            图层 <span className="font-['Liberation_Mono'] text-[11px]">1</span>
          </span>
          <span className="ml-auto flex h-full w-[37px] items-center gap-[5px] border-l border-[#445668] pl-1.5">
            <span className="size-[9px] rounded-full border border-[#c4c4c4]" />
            <span className="size-[6px] border border-black bg-[#4f80ff]" />
          </span>
          <span className="absolute top-0 right-0">
            <Icon w={6}>
              <path d="M0 0h6v6z" />
            </Icon>
          </span>
        </div>

        <div className="absolute right-[150px] bottom-[76px] flex size-[50px] flex-col items-center rounded-full border-2 border-[#2a8cf0] bg-white">
          <svg width="46" height="46" viewBox="0 0 46 46" className="absolute inset-0" aria-hidden="true">
            <circle cx="23" cy="23" r="21.500" fill="none" stroke="#222" />
            <path d="M19.500 19q3.500-2.500 7 0l1 4-1.500 5-2 2h-2l-2-2-1.500-5z" />
            <path d="M20 20q-3-4-8-4.500M17 17.500q-1.500-2-1-6M14 16q-2-1.500-2-4M19 19q1-3 .5-5.500M26 20q3-4 8-4.500M29 17.500q1.500-2 1-6M32 16q2-1.500 2-4M27 19q-1-3-.5-5.500" fill="none" stroke="#000" strokeWidth="1.300" />
          </svg>
          <span className="relative mt-[31px] text-[6px] leading-[9px] font-black whitespace-nowrap text-black">行鹿客</span>
        </div>
      </div>
      <div className="flex h-5 items-center justify-between pr-[25px] pl-[5px] text-xs text-[#c4c4c4]">
        <span className="flex items-baseline gap-1.5 whitespace-nowrap">
          <span className="font-['Liberation_Mono'] text-[11px]">1</span> 个图层
        </span>
        <div className="flex gap-2.5">
          {LAYER_ACTIONS.map((a) => (
            <button key={a.name} type="button" aria-label={a.name}>
              <Icon w={16}>{a.art}</Icon>
            </button>
          ))}
        </div>
      </div>
    </section>
  );
}

function Dock() {
  return (
    <nav className="w-[38px] shrink-0 border-r border-[#383838]">
      {DOCK_GROUPS.map((group, g) => (
        <div key={g} className="flex flex-col items-center border-b border-[#383838] pb-0.5">
          <div className="h-2.5 pt-[3px]">
            <Grip />
          </div>
          {group.map((d) => (
            <button
              key={d.name}
              type="button"
              aria-label={d.name}
              className={
                d.name === '路径查找器'
                  ? 'flex h-7 w-7 items-center justify-center rounded-sm border border-[#6a6a6a] bg-[#363636]'
                  : 'flex h-7 w-7 items-center justify-center'
              }
            >
              <Icon w={20}>{d.art}</Icon>
            </button>
          ))}
        </div>
      ))}
    </nav>
  );
}

export default function App() {
  return (
    <div className="flex min-h-screen flex-col border border-[#383838] bg-[#535353] font-['Noto_Sans_CJK_SC',sans-serif] select-none">
      {/* Shared ramp for the gradient-filled icons */}
      <svg width="0" height="0" className="absolute" aria-hidden="true">
        <linearGradient id="grey-ramp">
          <stop offset="0" stopColor="#b0b0b0" />
          <stop offset="1" stopColor="#484848" />
        </linearGradient>
      </svg>
      <MenuBar />
      <div className="mx-[3px] mb-[3px] flex flex-1 flex-col border border-[#383838]">
        <OptionsBar />
        <div className="flex flex-1">
          <ToolPanel />
          <DocumentArea />
          <div className="ml-px flex w-[319px] shrink-0 flex-col border-l border-[#383838]">
            <div className="flex h-3 items-center justify-between border-b border-[#383838] bg-[#424242] pr-[5px] pl-6">
              <DoubleChevron dir="left" />
              <DoubleChevron dir="right" />
            </div>
            <div className="flex flex-1">
              <Dock />
              <LayersPanel />
            </div>
          </div>
        </div>
      </div>
    </div>
  );
}
